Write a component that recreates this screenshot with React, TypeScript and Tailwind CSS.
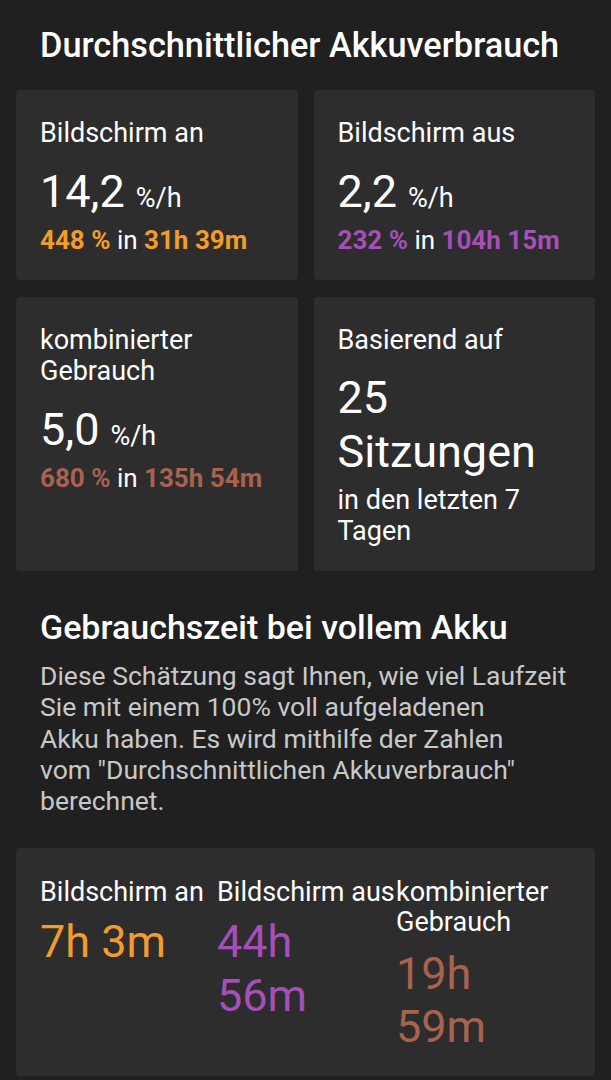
const ORANGE = 'text-[#f29d2b]';
const PURPLE = 'text-[#a64fb8]';
const BROWN = 'text-[#a8634f]';

type StatProps = {
  label: React.ReactNode;
  value: string;
  pct: string;
  time: string;
  color: string;
};

const StatCard = ({ label, value, pct, time, color }: StatProps) => (
  <div className="bg-[#2d2d2d] rounded-[4px] pl-6 pr-2 pt-[28px] pb-6">
    <p className="text-[27px] leading-[31px] text-white">{label}</p>
    <p className="mt-4 flex items-baseline text-white h-[54px]">
      <span className="text-[45px] leading-[54px]">{value}</span>
      <span className="ml-[11px] text-[27px] leading-[54px]">%/h</span>
    </p>
    <p className="mt-[6px] text-[26px] leading-[31px] text-white whitespace-nowrap">
      <span className={`font-bold ${color}`}>{pct}</span> in{' '}
      <span className={`font-bold ${color}`}>{time}</span>
    </p>
  </div>
);

export default function App() {
  return (
    <div
      className="h-[1080px] overflow-hidden bg-[#202020] px-4 text-white"
      style={{ fontFamily: 'Roboto, "Noto Sans", sans-serif' }}
    >
      <h1 className="px-6 pt-[25px] mb-[25px] text-[34.3px] leading-[40px] font-medium whitespace-nowrap">
        Durchschnittlicher Akkuverbrauch
      </h1>

      <div className="grid grid-cols-2 gap-x-4 gap-y-[17px]">
        <StatCard label="Bildschirm an" value="14,2" pct="448 %" time="31h 39m" color={ORANGE} />
        <StatCard label="Bildschirm aus" value="2,2" pct="232 %" time="104h 15m" color={PURPLE} />
        <StatCard
          label={
            <>
              kombinierter
              <br />
              Gebrauch
            </>
          }
          value="5,0"
          pct="680 %"
          time="135h 54m"
          color={BROWN}
        />
        <div className="bg-[#2d2d2d] rounded-[4px] pl-6 pr-2 pt-[28px] pb-6">
          <p className="text-[27px] leading-[31px]">Basierend auf</p>
          <p className="mt-[15px] text-[45px] leading-[54px]">
            25
            <br />
            Sitzungen
          </p>
          <p className="mt-[6px] text-[27px] leading-[31px]">
            in den letzten 7
            <br />
            Tagen
          </p>
        </div>
      </div>

      <h2 className="px-6 mt-[36px] text-[34px] leading-[40px] font-medium">
        Gebrauchszeit bei vollem Akku
      </h2>
      <p className="px-6 mt-[13px] text-[26.5px] leading-[31.3px] text-[#c8c8c8] whitespace-nowrap">
        Diese Schätzung sagt Ihnen, wie viel Laufzeit
        <br />
        Sie mit einem 100% voll aufgeladenen
        <br />
        Akku haben. Es wird mithilfe der Zahlen
        <br />
        vom "Durchschnittlichen Akkuverbrauch"
        <br />
        berechnet.
      </p>

      <div className="mt-[32px] h-[228px] bg-[#2d2d2d] rounded-[4px] pl-6 pr-2 pt-[29px] grid grid-cols-[177px_179px_1fr] items-start">
        <div>
          <p className="text-[27px] leading-[30px] whitespace-nowrap">Bildschirm an</p>
          <p className={`mt-2 text-[45px] leading-[54px] ${ORANGE}`}>7h 3m</p>
        </div>
        <div>
          <p className="text-[27px] leading-[30px] whitespace-nowrap">Bildschirm aus</p>
          <p className={`mt-2 text-[45px] leading-[54px] ${PURPLE}`}>
            44h
            <br />
            56m
          </p>
        </div>
        <div>
          <p className="text-[27px] leading-[30px]">
            kombinierter
            <br />
            Gebrauch
          </p>
          <p className={`mt-[10px] text-[45px] leading-[53px] ${BROWN}`}>
            19h
            <br />
            59m
          </p>
        </div>
      </div>
    </div>
  );
}
